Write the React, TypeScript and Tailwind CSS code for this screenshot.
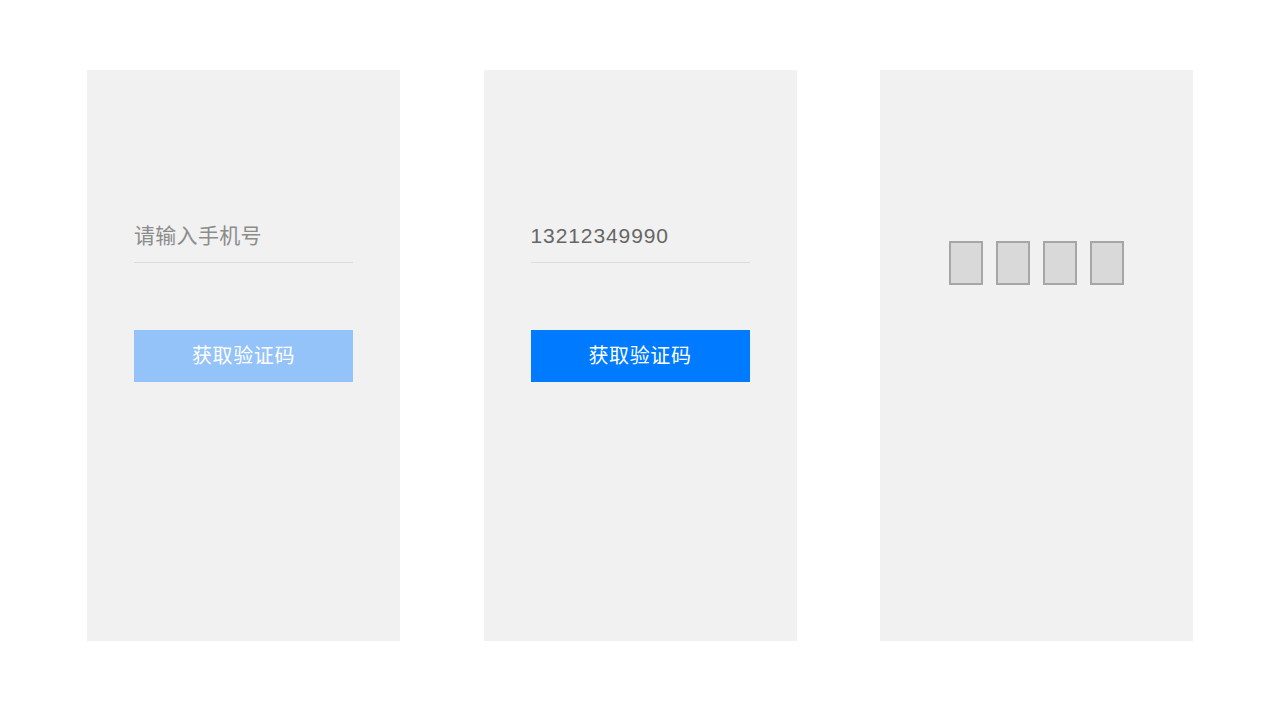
const font = {
  fontFamily: '"Liberation Sans", "Noto Sans CJK SC", sans-serif',
};

function Panel({ children, className = "" }: { children?: React.ReactNode; className?: string }) {
  return (
    <div className={`flex h-[571px] w-[313px] flex-col items-center bg-[#f1f1f1] ${className}`}>
      {children}
    </div>
  );
}

function PhoneForm({ value, active }: { value?: string; active?: boolean }) {
  return (
    <div className="flex w-[219px] flex-col">
      <div className="border-b border-[#dcdcdc] pb-[12px]">
        <div
          className={`h-[28px] text-[21px] leading-[28px] ${
            value ? "tracking-[0.9px] text-[#666666]" : "tracking-[0.3px] text-[#8c8c8c]"
          }`}
        >
          {value ?? "请输入手机号"}
        </div>
      </div>
      <button
        className={`mt-[67px] h-[52px] w-full text-[20px] tracking-[0.6px] text-white ${
          active ? "bg-[#007bff]" : "bg-[#93c3f8]"
        }`}
      >
        获取验证码
      </button>
    </div>
  );
}

export default function App() {
  return (
    <div className="min-h-[711px] bg-white pt-[70px]" style={font}>
      <div className="flex justify-center gap-[83.5px]">
        <Panel className="pt-[152px]">
          <PhoneForm />
        </Panel>
        <Panel className="pt-[152px]">
          <PhoneForm value="13212349990" active />
        </Panel>
        <Panel className="pt-[171px]">
          <div className="flex gap-[13px]">
            {[0, 1, 2, 3].map((i) => (
              <div key={i} className="h-[44px] w-[34px] border-2 border-[#a6a6a6] bg-[#d9d9d9]" />
            ))}
          </div>
        </Panel>
      </div>
    </div>
  );
}
